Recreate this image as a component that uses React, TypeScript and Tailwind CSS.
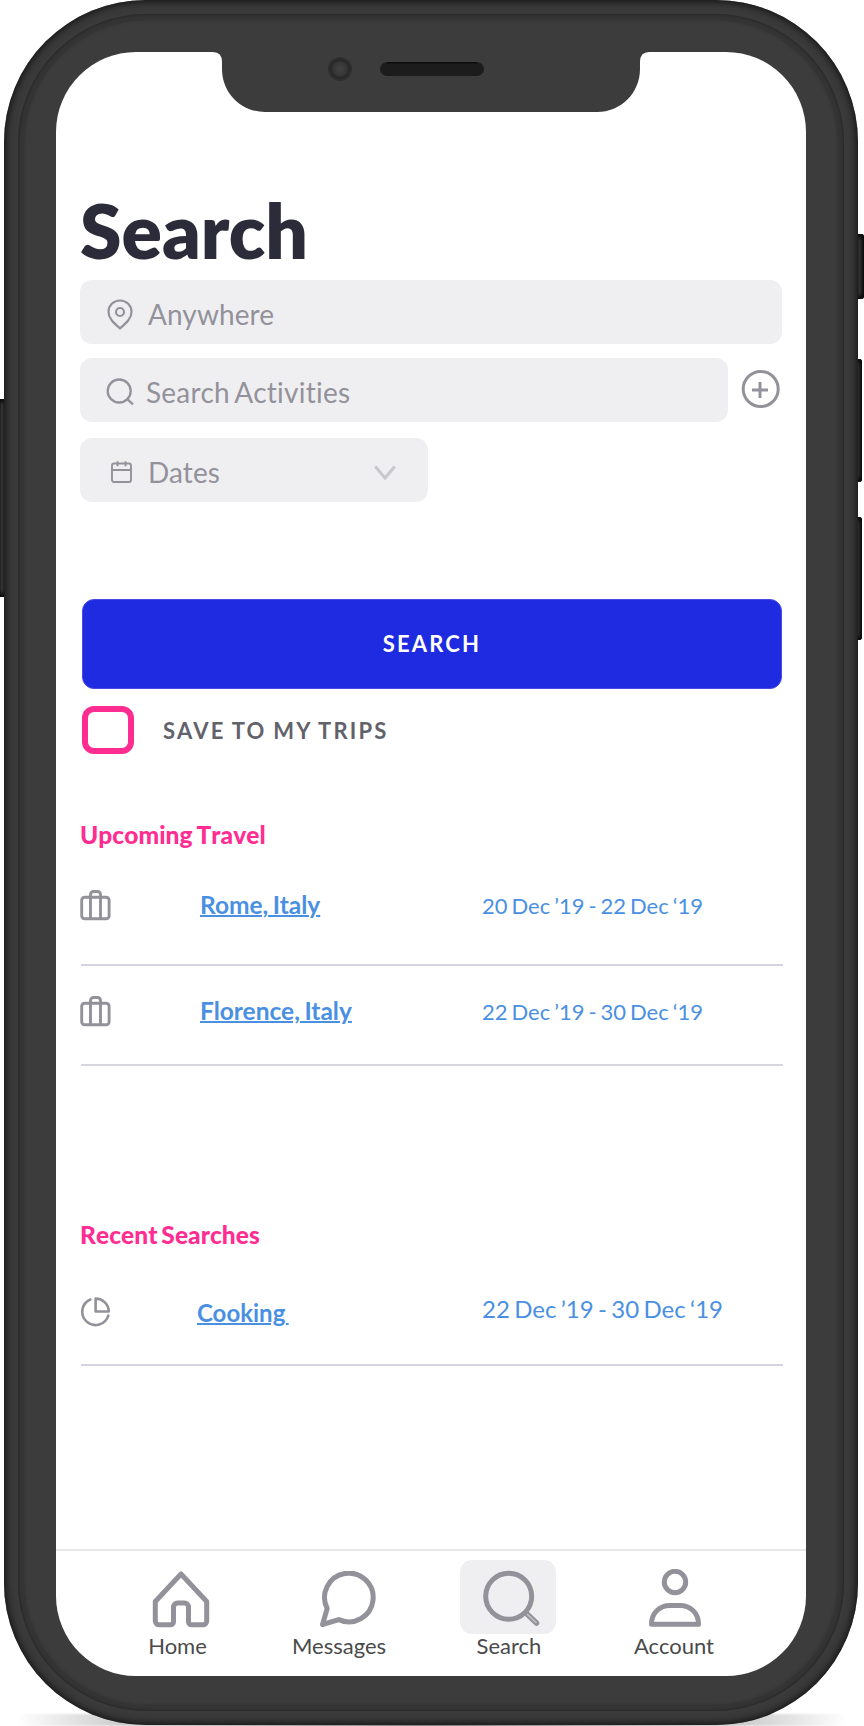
import React from "react";

const GRAY = "#93929a";

function PinIcon() {
  return (
    <svg className="mt-[5px]" width="26" height="31" viewBox="0 0 26 31" fill="none" stroke={GRAY} strokeWidth="2.200" strokeLinejoin="round">
      <path d="M13 1.500C6.400 1.500 1.500 6.600 1.500 12.700C1.500 20 7.500 24.500 13 29.300C18.500 24.500 24.500 20 24.500 12.700C24.500 6.600 19.600 1.500 13 1.500Z" />
      <circle cx="13" cy="13" r="4" />
    </svg>
  );
}

function SearchIcon() {
  return (
    <svg className="mt-[4px]" width="28" height="28" viewBox="0 0 28 28" fill="none" stroke={GRAY} strokeWidth="2.300">
      <circle cx="13.200" cy="13" r="11.500" />
      <path d="M21 20.800l6 5.500" />
    </svg>
  );
}

function CalendarIcon() {
  return (
    <svg className="mt-[3px]" width="21" height="22" viewBox="0 0 21 22" fill="none" stroke={GRAY} strokeWidth="1.900">
      <rect x="1" y="2.500" width="19" height="18.500" rx="2" />
      <path d="M1 9h19M6.500 0.300v5M14.500 0.300v5" />
    </svg>
  );
}

function SuitcaseIcon() {
  return (
    <svg className="block" width="31" height="31" viewBox="0 0 31 31" fill="none" stroke={GRAY} strokeWidth="2.900">
      <rect x="1.700" y="7.200" width="27.400" height="21.600" rx="3" />
      <path d="M10.500 28.500V4.500a3 3 0 0 1 3-3h4a3 3 0 0 1 3 3V28.500" />
    </svg>
  );
}

function PieIcon() {
  return (
    <svg className="block" width="31" height="30" viewBox="0 0 31 30" fill="none" stroke={GRAY} strokeWidth="2.600" strokeLinejoin="round" strokeLinecap="round">
      <path d="M10.300 2.500A13.300 13.300 0 1 0 28.300 18.600" />
      <path d="M15.600 1.600V14.500H28.800A13.200 13.200 0 0 0 15.600 1.600Z" />
    </svg>
  );
}

function Side({ className }: { className: string }) {
  return (
    <div
      className={
        "absolute bg-gradient-to-r from-[#111111] via-[#363637] to-[#151515] shadow-[inset_0_3px_4px_#0a0a0a,inset_0_-3px_4px_#0a0a0a] " +
        className
      }
    />
  );
}

function TravelRow({ icon, name, date, rowClass, nameClass, dateClass }: {
  icon: React.ReactNode; name: string; date: string; rowClass: string; nameClass: string; dateClass: string;
}) {
  return (
    <div className={"flex items-start " + rowClass}>
      <div className="w-[119px] shrink-0">{icon}</div>
      <div className={"w-[283px] shrink-0 leading-[30px] font-bold text-[#4a90e2] whitespace-pre underline underline-offset-[1px] decoration-2 " + nameClass}>{name}</div>
      <div className={"leading-[30px] text-[#4a90e2] whitespace-nowrap [word-spacing:-0.075em] " + dateClass}>{date}</div>
    </div>
  );
}

const divider = "ml-px h-[2px] w-[702px] bg-[#d5d5df]";
const label = "text-center text-[22px] leading-[24px] text-[#4a4a4a]";
const heading = "h-[30px] text-[24.5px] leading-[30px] font-black tracking-[0.05px] text-[#ff2d92] [font-kerning:none] [word-spacing:-2px]";

export default function App() {
  return (
    <div className="relative h-[1726px] w-[864px] overflow-hidden bg-white font-['Lato',sans-serif]">
      <div className="absolute top-[1714px] left-0 h-[12px] w-[864px] bg-gradient-to-r from-white from-[2%] via-[#444444] via-50% to-white to-[98%] blur-[1px]" />
      <Side className="top-[399px] left-[-3px] h-[198px] w-[10px] rounded-[3px]" />
      <Side className="top-[234px] left-[855px] h-[65px] w-[9px] rounded-[3px]" />
      <Side className="top-[359px] left-[854px] h-[123px] w-[8px] rounded-[3px]" />
      <Side className="top-[517px] left-[854px] h-[123px] w-[8px] rounded-[3px]" />

      <div className="relative ml-[4px] h-[1725px] w-[854px] rounded-[142px] bg-[#3a3a3b] p-[14px] shadow-[inset_0_0_7px_2px_#151515]">
        <div className="h-full rounded-[129px] bg-[#343435] p-[6px] shadow-[inset_0_0_3px_#1d1d1e]">
          <div className="h-full rounded-[123px] bg-[#3c3c3d] shadow-[inset_0_0_3px_#303031]">
            <div className="relative top-[32px] left-[32px] flex h-[1624px] w-[750px] flex-col overflow-hidden rounded-[80px] bg-white pl-[24px]">
              <h1 className="mt-[138px] h-[80px] text-[75px] leading-[80px] font-extrabold text-[#2b2b3a]">Search</h1>

              <div className="mt-[10px] flex h-[64px] w-[702px] items-center rounded-[12px] bg-[#efeff2] pl-[27px] text-[28px] text-[#93929a]">
                <PinIcon />
                <span className="ml-[15px] pt-[4px] tracking-[0.1px]">Anywhere</span>
              </div>
              <div className="mt-[14px] flex h-[64px] items-center">
                <div className="flex h-[64px] w-[648px] items-center rounded-[12px] bg-[#efeff2] pl-[26px] text-[28px] text-[#93929a]">
                  <SearchIcon />
                  <span className="ml-[12px] pt-[4px] tracking-[0.24px] [word-spacing:-2px]">Search Activities</span>
                </div>
                <svg className="ml-[13px]" width="40" height="40" viewBox="0 0 40 40" fill="none" stroke={GRAY} strokeWidth="3">
                  <circle cx="19.700" cy="19" r="17.500" />
                  <path d="M11 20h16M19 12v16" />
                </svg>
              </div>
              <div className="mt-[16px] flex h-[64px] w-[348px] items-center rounded-[12px] bg-[#efeff2] pl-[31px] text-[28px] text-[#93929a]">
                <CalendarIcon />
                <span className="ml-[16px] pt-[4px] tracking-[0.1px]">Dates</span>
                <svg className="mt-[5px] mr-[32px] ml-auto" width="22" height="16" viewBox="0 0 22 16" fill="none" stroke="#c7c7cc" strokeWidth="3">
                  <path d="M1.300 1.500L11 13l9.700-11.500" />
                </svg>
              </div>

              <button className="mt-[97px] ml-[2px] h-[90px] w-[700px] rounded-[12px] border border-[#4a4ae6] bg-[#1e2be0] pb-[2px] text-[22px] font-bold tracking-[2.150px] text-white">SEARCH</button>
              <div className="mt-[17px] ml-[2px] flex h-[48px] items-center">
                <div className="h-[48px] w-[52px] rounded-[12px] border-6 border-[#ff2d92]" />
                <span className="ml-[29px] pt-px text-[22px] font-bold tracking-[2.200px] text-[#62626b] [word-spacing:-0.7px]">SAVE TO MY TRIPS</span>
              </div>

              <h2 className={"mt-[66px] " + heading}>Upcoming Travel</h2>
              <TravelRow icon={<SuitcaseIcon />} name="Rome, Italy" date="20 Dec ’19 - 22 Dec ‘19" rowClass="mt-[40px] h-[74px]" nameClass="pl-px text-[24.5px] [word-spacing:-1.5px]" dateClass="text-[22px] pt-px" />
              <div className={divider} />
              <TravelRow icon={<SuitcaseIcon />} name="Florence, Italy" date="22 Dec ’19 - 30 Dec ‘19" rowClass="mt-[30px] h-[68px]" nameClass="pl-px text-[24.5px] [word-spacing:-1.5px]" dateClass="text-[22px] pt-px" />
              <div className={divider} />
              <h2 className={"mt-[154px] " + heading}>Recent Searches</h2>
              <TravelRow icon={<PieIcon />} name="Cooking " date="22 Dec ’19 - 30 Dec ‘19" rowClass="mt-[47px] h-[67px]" nameClass="pt-px -ml-[2px] mr-[2px] text-[24px] [word-spacing:-2.5px]" dateClass="text-[24px] -mt-[3px]" />
              <div className={divider} />

              <nav className="mt-[183px] ml-[-24px] flex h-[127px] border-t-2 border-[#e6e6e8] pt-[9px] pl-[40px]">
                <div className="w-[163px]">
                  <div className="flex h-[74px] justify-center pt-[11px] pl-[7px]">
                    <svg width="58" height="57" viewBox="0 0 58 57" fill="none" stroke={GRAY} strokeWidth="5" strokeLinejoin="round">
                      <path d="M29 3L3.300 30.500V50a3.800 3.800 0 0 0 3.800 3.800H18.500a3 3 0 0 0 3-3V36a4 4 0 0 1 4-4h7a4 4 0 0 1 4 4v14.800a3 3 0 0 0 3 3H50.900a3.800 3.800 0 0 0 3.800-3.800V30.500Z" />
                    </svg>
                  </div>
                  <div className={label}>Home</div>
                </div>
                <div className="w-[160px]">
                  <div className="flex h-[74px] justify-center pt-[11px] pl-[18px]">
                    <svg width="58" height="57" viewBox="0 0 58 57" fill="none" stroke={GRAY} strokeWidth="5" strokeLinejoin="round">
                      <path d="M8.200 37.500A24.300 24.300 0 1 1 19.800 48.600L3.500 53.500Z" />
                    </svg>
                  </div>
                  <div className={label}>Messages</div>
                </div>
                <div className="w-[180px]">
                  <div className="ml-[41px] flex h-[74px] w-[96px] rounded-[12px] bg-[#efeff2] pt-[11px] pl-[23px]">
                    <svg className="overflow-visible" width="57" height="56" viewBox="0 0 57 56" fill="none" stroke={GRAY} strokeWidth="5">
                      <path d="M43.500 42.500L53.500 52" strokeWidth="5.500" strokeLinecap="round" />
                      <path d="M44.500 43.500L53 51.500" stroke="#c4c4c9" strokeWidth="1.500" strokeLinecap="round" />
                      <circle cx="25.700" cy="25.200" r="23" />
                    </svg>
                  </div>
                  <div className={label}>Search</div>
                </div>
                <div className="w-[150px]">
                  <div className="flex h-[74px] justify-center pt-[9px] pl-[2px]">
                    <svg width="54" height="58" viewBox="0 0 54 58" fill="none" stroke={GRAY} strokeWidth="5" strokeLinejoin="round">
                      <circle cx="27" cy="13" r="10.700" />
                      <path d="M3.500 55.300C3.500 43.500 12 36.500 22 36.500H32C42 36.500 50.500 43.500 50.500 55.300Z" />
                    </svg>
                  </div>
                  <div className={label}>Account</div>
                </div>
              </nav>
            </div>
          </div>
        </div>
      </div>

      <svg className="absolute top-[50px] left-[210px]" width="442" height="64" viewBox="210 50 442 64">
        <defs>
          <radialGradient id="lens">
            <stop offset="0" stopColor="#434344" />
            <stop offset="0.600" stopColor="#353536" />
            <stop offset="0.700" stopColor="#282829" />
            <stop offset="1" stopColor="#303031" />
          </radialGradient>
        </defs>
        <path d="M210 50H652V52H649Q640 52 640 62V69C640 93 621 112 597 112H265C241 112 222 93 222 69V62Q222 52 213 52H210Z" fill="#3c3c3d" />
        <circle cx="340" cy="69" r="12" fill="url(#lens)" />
        <rect x="380" y="62" width="104" height="14" rx="7" fill="#1c1c1d" />
        <path d="M387 62.700H477" stroke="#0c0c0c" strokeWidth="1.500" />
      </svg>
    </div>
  );
}
